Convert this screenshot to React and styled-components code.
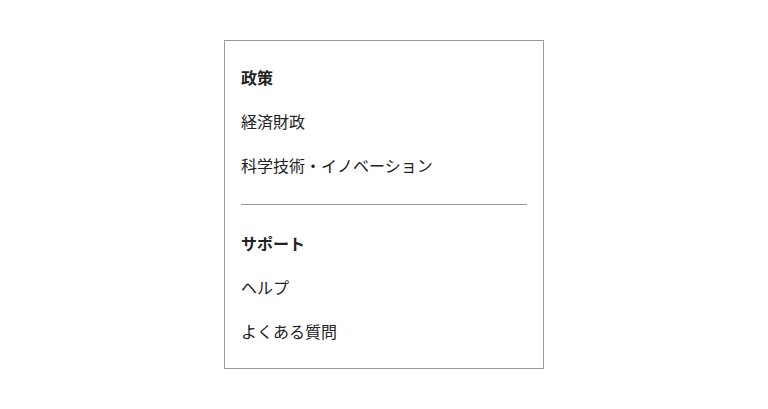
import React from "react";
import styled, { createGlobalStyle } from "styled-components";

const GlobalStyle = createGlobalStyle`
  html, body {
    margin: 0;
    background: #ffffff;
  }
  body {
    font-family: "Noto Sans CJK JP", "Noto Sans", sans-serif;
    color: #222222;
  }
`;

const Page = styled.div`
  display: flex;
  justify-content: center;
  padding-top: 40px;
`;

const Menu = styled.nav`
  box-sizing: border-box;
  width: 320px;
  border: 1px solid #9a9a9a;
  padding: 14px 16px 15px;
  background: #ffffff;
`;

const Group = styled.ul`
  list-style: none;
  margin: 0;
  padding: 0;
`;

const Item = styled.li`
  height: 44px;
  display: flex;
  align-items: center;
  font-size: 16px;
  line-height: 24px;
  font-weight: ${(p) => (p.$heading ? 700 : 400)};
  color: #222222;
`;

const Divider = styled.hr`
  border: 0;
  border-top: 1px solid #9a9a9a;
  margin: 17px 0 16px;
`;

const groups = [
  { title: "政策", items: ["経済財政", "科学技術・イノベーション"] },
  { title: "サポート", items: ["ヘルプ", "よくある質問"] },
];

export default function App() {
  return (
    <>
      <GlobalStyle />
      <Page>
        <Menu>
          {groups.map((g, i) => (
            <React.Fragment key={g.title}>
              {i > 0 && <Divider />}
              <Group>
                <Item $heading>{g.title}</Item>
                {g.items.map((label) => (
                  <Item key={label}>{label}</Item>
                ))}
              </Group>
            </React.Fragment>
          ))}
        </Menu>
      </Page>
    </>
  );
}
